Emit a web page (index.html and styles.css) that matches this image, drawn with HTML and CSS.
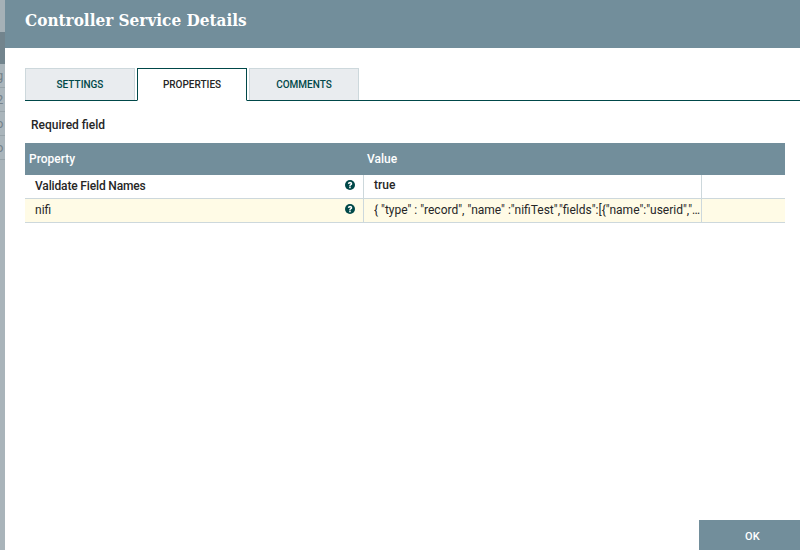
FILE: index.html
```html
<!DOCTYPE html>
<html lang="en">
<head>
<meta charset="utf-8">
<title>Controller Service Details</title>
<link rel="stylesheet" href="styles.css">
</head>
<body>
<div class="page">
  <div class="backdrop">
    <div class="bd-top"></div>
    <div class="bd-head"></div>
    <div class="bd-row">g</div>
    <div class="bd-row">2</div>
    <div class="bd-row">o</div>
    <div class="bd-row">o</div>
    <div class="bd-rest"></div>
  </div>
  <div class="dialog">
    <header class="dialog-header">Controller Service Details</header>
    <div class="dialog-body">
      <nav class="tabs">
        <div class="tab">SETTINGS</div>
        <div class="tab active">PROPERTIES</div>
        <div class="tab">COMMENTS</div>
      </nav>
      <div class="required">Required field</div>
      <div class="table">
        <div class="row head">
          <div class="c-prop">Property</div>
          <div class="c-val">Value</div>
          <div class="c-act"></div>
        </div>
        <div class="row req">
          <div class="c-prop"><span class="name">Validate Field Names</span>
            <svg class="help" viewBox="0 0 24 24"><circle cx="12" cy="12" r="12"/><path class="q" d="M6.8 9.2C7.1 6.2 9.3 4.4 12.2 4.4c3 0 5.2 1.9 5.2 4.5 0 1.9-1 2.9-2.4 3.8-1 .7-1.3 1-1.3 2v.4h-3.6v-.8c0-1.7.7-2.6 1.9-3.4 1-.7 1.5-1.1 1.5-1.7 0-.7-.6-1.2-1.4-1.2-.9 0-1.5.6-1.7 1.6zM10.1 16h3.6v3.5h-3.6z"/></svg>
          </div>
          <div class="c-val">true</div>
          <div class="c-act"></div>
        </div>
        <div class="row hl">
          <div class="c-prop"><span class="name">nifi</span>
            <svg class="help" viewBox="0 0 24 24"><circle cx="12" cy="12" r="12"/><path class="q" d="M6.8 9.2C7.1 6.2 9.3 4.4 12.2 4.4c3 0 5.2 1.9 5.2 4.5 0 1.9-1 2.9-2.4 3.8-1 .7-1.3 1-1.3 2v.4h-3.6v-.8c0-1.7.7-2.6 1.9-3.4 1-.7 1.5-1.1 1.5-1.7 0-.7-.6-1.2-1.4-1.2-.9 0-1.5.6-1.7 1.6zM10.1 16h3.6v3.5h-3.6z"/></svg>
          </div>
          <div class="c-val"><span class="clip">{ "type" : "record", "name" :"nifiTest","fields":[{"name":"userid","type":"string"}]}</span></div>
          <div class="c-act"></div>
        </div>
      </div>
      <div class="spacer"></div>
      <footer class="actions"><div class="ok">OK</div></footer>
    </div>
  </div>
</div>
</body>
</html>
```
FILE: styles.css
```css
* { box-sizing: border-box; }
html, body { margin: 0; padding: 0; }
body { font-family: Roboto, "Liberation Sans", sans-serif; background: #fff; }
.page { width: 800px; height: 550px; display: flex; overflow: hidden; }

.backdrop { width: 5px; flex: none; display: flex; flex-direction: column; background: #a9b4ba; overflow: hidden; }
.bd-top { height: 32px; background: #a5b1b7; }
.bd-head { height: 32px; background: #72848d; }
.bd-row { height: 24px; border-bottom: 1px solid #97a3a9; background: #aab5bb; color: #75828a; font-size: 13px; line-height: 23px; text-indent: -4px; white-space: nowrap; }
.bd-rest { flex: 1; background: #a9b4ba; }

.dialog { flex: 1; display: flex; flex-direction: column; min-width: 0; }
.dialog-header { height: 48px; flex: none; background: #728e9b; color: #fff; font-family: "DejaVu Serif Condensed", "DejaVu Serif", serif; font-weight: 700; font-size: 17px; line-height: 41px; padding-left: 20px; }
.dialog-body { flex: 1; display: flex; flex-direction: column; padding: 20px 0 0 20px; min-height: 0; }

.tabs { display: flex; gap: 2px; height: 33px; flex: none; border-bottom: 1px solid #004849; }
.tab { width: 110px; height: 32px; background: #e9ecef; border: 1px solid #cdd8dc; border-bottom: 0; color: #004849; font-size: 10px; font-weight: 500; line-height: 31px; text-align: center; }
.tab.active { height: 33px; background: #fff; border: 1px solid #004849; border-bottom: 1px solid #fff; color: #262626; }

.required { height: 42px; flex: none; padding: 17px 0 0 6px; font-size: 12px; font-weight: 500; line-height: 15px; color: #262626; }

.table { margin-right: 15px; flex: none; font-size: 12px; color: #262626; }
.row { display: flex; height: 24px; border-bottom: 1px solid #cdd8dc; }
.row.head { height: 32px; background: #728e9b; border: 0; color: #fff; font-weight: 500; line-height: 32px; }
.row.hl { background: #fffbe6; }
.c-prop { width: 338px; flex: none; display: flex; align-items: center; justify-content: space-between; padding: 0 8px 2px 10px; }
.head .c-prop { padding: 0 0 0 4px; }
.c-val { width: 338px; flex: none; border-left: 1px solid #cdd8dc; padding: 0 0 0 10px; line-height: 22px; overflow: hidden; white-space: nowrap; display: flex; }
.req .c-val { line-height: 20px; }
.head .c-val { border: 0; padding-left: 4px; line-height: 32px; }
.c-act { flex: 1; border-left: 1px solid #cdd8dc; }
.head .c-act { border: 0; }
.req { font-weight: 500; }
.req .name { letter-spacing: -.15px; }
.name { line-height: 20px; }
.clip { display: block; overflow: hidden; text-overflow: ellipsis; min-width: 0; }
.help { width: 10px; height: 10px; fill: #004849; flex: none; margin-bottom: 1px; }
.help .q { fill: #fff; }

.spacer { flex: 1; }
.actions { display: flex; justify-content: flex-end; flex: none; }
.ok { width: 101px; height: 30px; background: #728e9b; color: #fff; font-size: 11px; font-weight: 500; line-height: 33px; text-align: center; padding-left: 6px; letter-spacing: .3px; }
```
